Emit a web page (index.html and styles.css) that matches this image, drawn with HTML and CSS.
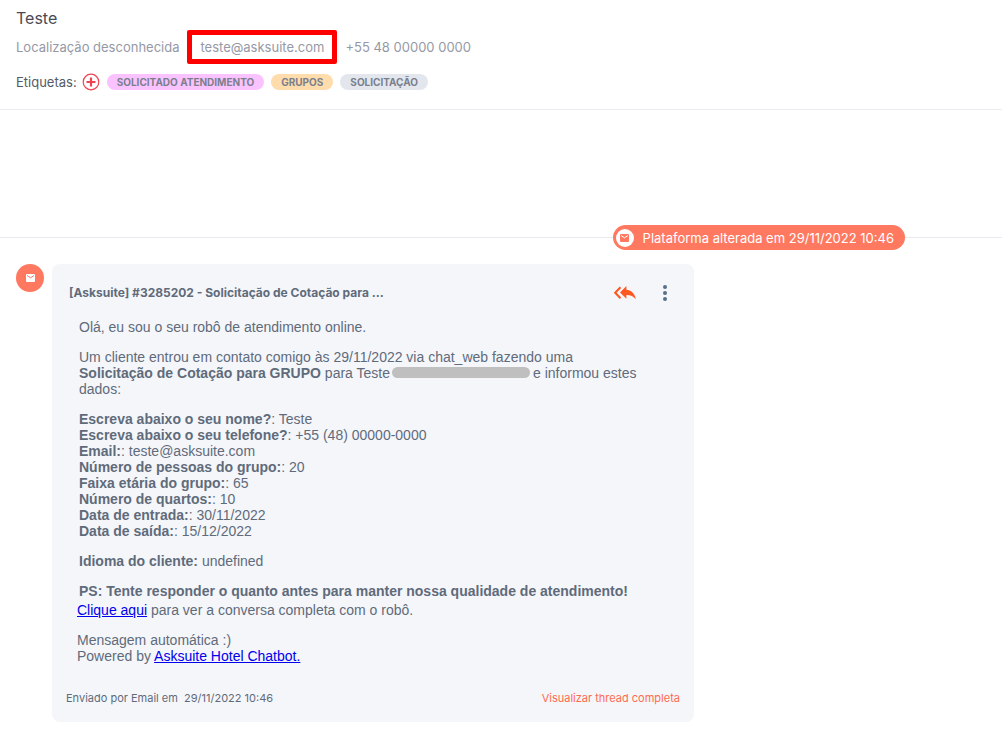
FILE: index.html
```html
<!DOCTYPE html>
<html lang="pt-BR">
<head>
<meta charset="utf-8">
<title>Conversa</title>
<link rel="stylesheet" href="styles.css">
</head>
<body>
<header class="contact">
  <h1 class="contact-name">Teste</h1>
  <div class="contact-info">
    <span>Localização desconhecida</span>
    <span class="highlight">teste@asksuite.com</span>
    <span>+55 48 00000 0000</span>
  </div>
  <div class="tags">
    <span class="tags-label">Etiquetas:</span>
    <button class="add-tag" type="button" aria-label="Adicionar etiqueta">
      <svg width="18" height="18" viewBox="0 0 18 18" fill="none" stroke="#ee4350"><circle cx="9" cy="9" r="7.8" stroke-width="1.2"/><path d="M9 4.5v9M4.5 9h9" stroke-width="2.2"/></svg>
    </button>
    <span class="tag tag-pink">SOLICITADO ATENDIMENTO</span>
    <span class="tag tag-orange">GRUPOS</span>
    <span class="tag tag-gray">SOLICITAÇÃO</span>
  </div>
</header>
<main class="thread">
  <div class="divider">
    <div class="platform">
      <span class="platform-icon">
        <svg width="9" height="8" viewBox="0 0 9 8"><rect width="9" height="8" rx="1" fill="#ff7961"/><path d="M1 1.5l3.5 2.3L8 1.5" fill="none" stroke="#fff" stroke-width="1"/></svg>
      </span>
      <span>Plataforma alterada em 29/11/2022 10:46</span>
    </div>
  </div>
  <div class="message">
    <span class="avatar">
      <svg width="9" height="8" viewBox="0 0 9 8"><rect width="9" height="8" rx="1" fill="#fff"/><path d="M1 1.5l3.5 2.3L8 1.5" fill="none" stroke="#ff7961" stroke-width="1"/></svg>
    </span>
    <article class="card">
      <div class="card-head">
        <h2 class="subject">[Asksuite] #3285202 - Solicitação de Cotação para ...</h2>
        <button class="icon-button" type="button" aria-label="Responder a todos">
          <svg width="22" height="14" viewBox="0 0 22 14"><path d="M6.5 1.2L1.2 6.7l5.3 5.5" fill="none" stroke="#ff5722" stroke-width="2"/><path d="M12.4 0v3.7c5.4.6 8.4 4 9.4 9.6-2.2-3-5-4.4-9.4-4.4v3.9L6 6.5z" fill="#ff5722"/></svg>
        </button>
        <button class="icon-button" type="button" aria-label="Mais opções">
          <svg width="4" height="16" viewBox="0 0 4 16" fill="#54708a"><circle cx="2" cy="2" r="2"/><circle cx="2" cy="8" r="2"/><circle cx="2" cy="14" r="2"/></svg>
        </button>
      </div>
      <div class="email">
        <p>Olá, eu sou o seu robô de atendimento online.</p>
        <p>Um cliente entrou em contato comigo às 29/11/2022 via chat_web fazendo uma<br>
        <b>Solicitação de Cotação para GRUPO</b> para Teste<span class="redacted"></span>e informou estes<br>
        dados:</p>
        <p><b>Escreva abaixo o seu nome?</b>: Teste<br>
        <b>Escreva abaixo o seu telefone?</b>: +55 (48) 00000-0000<br>
        <b>Email:</b>: teste@asksuite.com<br>
        <b>Número de pessoas do grupo:</b>: 20<br>
        <b>Faixa etária do grupo:</b>: 65<br>
        <b>Número de quartos:</b>: 10<br>
        <b>Data de entrada:</b>: 30/11/2022<br>
        <b>Data de saída:</b>: 15/12/2022</p>
        <p><b>Idioma do cliente:</b> undefined</p>
        <p><b>PS: Tente responder o quanto antes para manter nossa qualidade de atendimento!</b></p>
      </div>
      <div class="email-end">
        <p><a href="#conversa">Clique aqui</a> para ver a conversa completa com o robô.</p>
        <p>Mensagem automática :)<br>Powered by <a href="#chatbot">Asksuite Hotel Chatbot.</a></p>
      </div>
      <footer class="card-foot">
        <span>Enviado por Email em &nbsp;29/11/2022 10:46</span>
        <a class="thread-link" href="#thread">Visualizar thread completa</a>
      </footer>
    </article>
  </div>
</main>
</body>
</html>
```
FILE: styles.css
```css
* { box-sizing: border-box; }
body {
  margin: 0;
  background: #fff;
  color: #5f6b7a;
  font-family: Inter, "Liberation Sans", sans-serif;
}
h1, h2, p { margin: 0; }
button { border: 0; padding: 0; background: none; cursor: pointer; display: flex; }

.contact { padding: 8px 16px 18px; border-bottom: 1px solid #ececf0; }
.contact-name { font-size: 16px; line-height: 20px; font-weight: 400; color: #4a4a55; }
.contact-info {
  display: flex;
  align-items: center;
  gap: 8px;
  margin-top: 2px;
  font-size: 13px;
  line-height: 24px;
  color: #9699a6;
}
.highlight { border: 5px solid #f00; border-radius: 2px; padding: 0 8px; }
.tags { display: flex; align-items: center; gap: 7px; margin-top: 9px; height: 18px; }
.tags-label { font-size: 13px; line-height: 18px; color: #555b66; }
.add-tag { margin-left: -2px; }
.tag {
  height: 16px;
  padding: 0 10px;
  border-radius: 8px;
  font-size: 10px;
  line-height: 16px;
  font-weight: 700;
  color: #7b7f8d;
}
.tag-pink { background: #fac3ff; }
.tag-orange { background: #ffdcab; }
.tag-gray { background: #e3e7ed; }

.thread { padding-top: 115px; }
.divider {
  display: flex;
  justify-content: flex-end;
  padding-right: 97px;
  background: linear-gradient(#e9e9f2, #e9e9f2) 0 12px / 100% 1px no-repeat;
}
.platform {
  display: flex;
  align-items: center;
  gap: 9px;
  height: 25px;
  padding: 0 11px 0 3px;
  border-radius: 13px;
  background: #ff7961;
  color: #fff;
  font-size: 13px;
}
.platform-icon {
  display: flex;
  align-items: center;
  justify-content: center;
  width: 18px;
  height: 18px;
  border-radius: 50%;
  background: #fff;
}
.message { display: flex; gap: 8px; padding: 14px 16px 9px; }
.avatar {
  display: flex;
  flex: none;
  align-items: center;
  justify-content: center;
  width: 28px;
  height: 28px;
  border-radius: 50%;
  background: #ff7961;
}
.card {
  flex: 0 1 642px;
  padding: 20px 14px 16px;
  border-radius: 8px;
  background: #f5f6fa;
}
.card-head { display: flex; align-items: center; height: 18px; padding: 0 13px 0 3px; gap: 27px; }
.subject { flex: 1; font-size: 12px; line-height: 18px; font-weight: 700; }
.email, .email-end {
  display: grid;
  gap: 14px;
  font-family: "Liberation Sans", Arial, sans-serif;
  font-size: 14px;
  line-height: 16px;
}
.email { padding: 17px 13px 0; }
.email-end { padding: 3px 11px 0; }
.email-end a { color: #00e; }
.redacted {
  display: inline-block;
  width: 138px;
  height: 11px;
  margin: 0 3px 0 2px;
  border-radius: 6px;
  background: #bfbfbf;
}
.card-foot {
  display: flex;
  justify-content: space-between;
  margin-top: 26px;
  font-size: 11px;
  line-height: 16px;
}
.thread-link { color: #ff6b4f; text-decoration: none; }
```
